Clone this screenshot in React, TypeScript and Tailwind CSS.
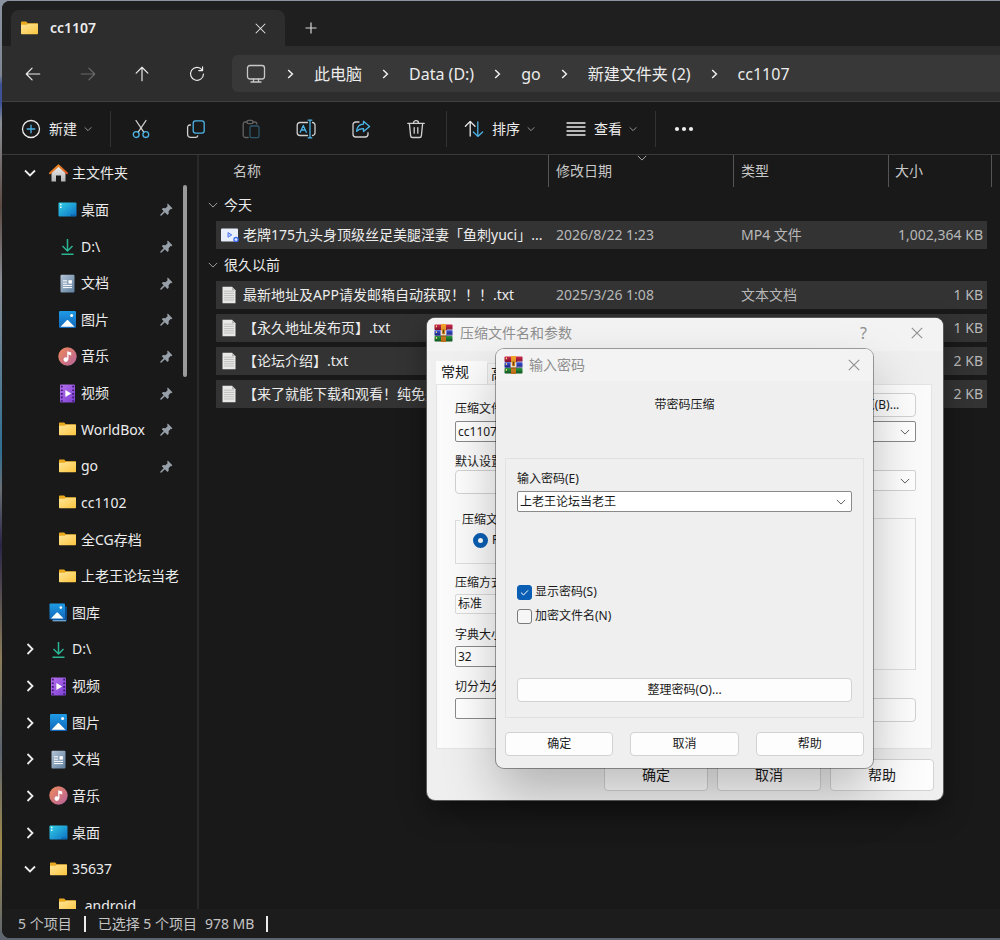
import type { ReactNode } from "react";
import clsx from "clsx";

type IconName = "home" | "desktop" | "download" | "doc" | "picture" | "music" | "video" | "folder" | "gallery";

type TreeItem = {
  label: string;
  icon: IconName;
  child?: boolean;
  pinned?: boolean;
  chevron?: "open" | "closed";
};

const tree: TreeItem[] = [
  { label: "主文件夹", icon: "home", chevron: "open" },
  { label: "桌面", icon: "desktop", child: true, pinned: true },
  { label: "D:\\", icon: "download", child: true, pinned: true },
  { label: "文档", icon: "doc", child: true, pinned: true },
  { label: "图片", icon: "picture", child: true, pinned: true },
  { label: "音乐", icon: "music", child: true, pinned: true },
  { label: "视频", icon: "video", child: true, pinned: true },
  { label: "WorldBox", icon: "folder", child: true, pinned: true },
  { label: "go", icon: "folder", child: true, pinned: true },
  { label: "cc1102", icon: "folder", child: true },
  { label: "全CG存档", icon: "folder", child: true },
  { label: "上老王论坛当老", icon: "folder", child: true },
  { label: "图库", icon: "gallery" },
  { label: "D:\\", icon: "download", chevron: "closed" },
  { label: "视频", icon: "video", chevron: "closed" },
  { label: "图片", icon: "picture", chevron: "closed" },
  { label: "文档", icon: "doc", chevron: "closed" },
  { label: "音乐", icon: "music", chevron: "closed" },
  { label: "桌面", icon: "desktop", chevron: "closed" },
  { label: "35637", icon: "folder", chevron: "open" },
  { label: ".android", icon: "folder", child: true },
];

const groups = [
  {
    title: "今天",
    files: [
      { name: "老牌175九头身顶级丝足美腿淫妻「鱼刺yuci」...", date: "2026/8/22 1:23", type: "MP4 文件", size: "1,002,364 KB", video: true },
    ],
  },
  {
    title: "很久以前",
    files: [
      { name: "最新地址及APP请发邮箱自动获取！！！.txt", date: "2025/3/26 1:08", type: "文本文档", size: "1 KB" },
      { name: "【永久地址发布页】.txt", date: "2025/3/26 1:08", type: "文本文档", size: "1 KB" },
      { name: "【论坛介绍】.txt", date: "2025/3/26 1:08", type: "文本文档", size: "2 KB" },
      { name: "【来了就能下载和观看！纯免费】.txt", date: "2025/3/26 1:08", type: "文本文档", size: "2 KB" },
    ],
  },
];

const crumbs = ["此电脑", "Data (D:)", "go", "新建文件夹 (2)", "cc1107"];

function Line({ size = 20, className, children }: { size?: number; className?: string; children: ReactNode }) {
  return (
    <svg
      width={size}
      height={size}
      viewBox="0 0 20 20"
      fill="none"
      stroke="currentColor"
      strokeWidth="1.3"
      strokeLinecap="round"
      strokeLinejoin="round"
      className={clsx("shrink-0", className)}
      aria-hidden="true"
    >
      {children}
    </svg>
  );
}

function Chevron({ dir, size = 12, width = 1.6, className }: { dir: "down" | "right"; size?: number; width?: number; className?: string }) {
  return (
    <svg width={size} height={size} viewBox="0 0 12 12" fill="none" stroke="currentColor" strokeWidth={width} className={clsx("shrink-0", className)} aria-hidden="true">
      <path d={dir === "down" ? "M1 3.5 6 8.5 11 3.5" : "M3.5 1 8.5 6 3.5 11"} />
    </svg>
  );
}

function Cross({ size = 12 }: { size?: number }) {
  return (
    <svg width={size} height={size} viewBox="0 0 12 12" fill="none" stroke="currentColor" strokeWidth="1.1" aria-hidden="true">
      <path d="M.8.8 11.2 11.2M11.2.8.8 11.2" />
    </svg>
  );
}

function Gradients() {
  return (
    <svg className="absolute size-0" aria-hidden="true">
      <defs>
        <linearGradient id="folder" x1="0" y1="0" x2="1" y2="1">
          <stop offset="0" stopColor="#ffe597" />
          <stop offset="1" stopColor="#fbc53f" />
        </linearGradient>
        <linearGradient id="desktop" x1="0" y1="0" x2="1" y2="1">
          <stop offset="0" stopColor="#33d0e6" />
          <stop offset="1" stopColor="#0c6fc4" />
        </linearGradient>
        <linearGradient id="doc" x1="0" y1="0" x2="1" y2="1">
          <stop offset="0" stopColor="#b4c4d6" />
          <stop offset="1" stopColor="#5f7f9f" />
        </linearGradient>
        <linearGradient id="picture" x1="0" y1="0" x2="0" y2="1">
          <stop offset="0" stopColor="#1f9be6" />
          <stop offset="1" stopColor="#1166b8" />
        </linearGradient>
        <linearGradient id="music" x1="0" y1="0" x2="1" y2="1">
          <stop offset="0" stopColor="#f08a5a" />
          <stop offset="1" stopColor="#b4629c" />
        </linearGradient>
        <linearGradient id="video" x1="0" y1="0" x2="1" y2="1">
          <stop offset="0" stopColor="#b870ee" />
          <stop offset="1" stopColor="#7a3fd0" />
        </linearGradient>
        <linearGradient id="house" x1="0" y1="0" x2="0" y2="1">
          <stop offset="0" stopColor="#f0f0f0" />
          <stop offset="1" stopColor="#b4b4b4" />
        </linearGradient>
        <linearGradient id="roof" x1="0" y1="0" x2="1" y2="1">
          <stop offset="0" stopColor="#f59b2c" />
          <stop offset="1" stopColor="#d9541e" />
        </linearGradient>
        <linearGradient id="belt" x1="0" y1="0" x2="0" y2="1">
          <stop offset="0" stopColor="#f2a52c" />
          <stop offset="1" stopColor="#b8691a" />
        </linearGradient>
        <linearGradient id="book-red" x1="0" y1="0" x2="0" y2="1">
          <stop offset="0" stopColor="#d02848" />
          <stop offset="1" stopColor="#7c1230" />
        </linearGradient>
        <linearGradient id="book-blue" x1="0" y1="0" x2="0" y2="1">
          <stop offset="0" stopColor="#3c50d8" />
          <stop offset="1" stopColor="#1a2378" />
        </linearGradient>
        <linearGradient id="book-green" x1="0" y1="0" x2="0" y2="1">
          <stop offset="0" stopColor="#2f9c44" />
          <stop offset="1" stopColor="#0f5220" />
        </linearGradient>
      </defs>
    </svg>
  );
}

function FolderIcon() {
  return (
    <svg width="19" height="19" viewBox="0 0 19 19" className="shrink-0" aria-hidden="true">
      <path d="M1 3.6c0-.6.4-1 1-1h4.2l1.6 1.6H17c.6 0 1 .4 1 1V8H1z" fill="#e9a91f" />
      <path d="M1 5.8h5.6l1.4-1H18v9.4c0 .6-.4 1-1 1H2c-.6 0-1-.4-1-1z" fill="url(#folder)" />
    </svg>
  );
}

function TreeIcon({ name }: { name: IconName }) {
  if (name === "folder") return <FolderIcon />;
  return (
    <svg width="19" height="19" viewBox="0 0 19 19" className="shrink-0" aria-hidden="true">
      {name === "home" && (
        <>
          <path d="M2.5 8.5 9.5 2l7 6.5v9H12v-6H7v6H2.5z" fill="url(#house)" />
          <path d="M1 9.3 9.5 1.4 18 9.3" fill="none" stroke="url(#roof)" strokeWidth="2" strokeLinejoin="round" strokeLinecap="round" />
        </>
      )}
      {name === "desktop" && (
        <>
          <rect x=".5" y="2.5" width="18" height="14" rx="1" fill="url(#desktop)" />
          <path d="M2 4.5h1.5M2 7.2h1.5" stroke="#e8fbff" strokeWidth="1.4" />
          <path d="M13 15.2h1.4M15.4 15.2h1.4" stroke="#0a4a86" strokeWidth="1" />
        </>
      )}
      {name === "download" && (
        <path d="M9.5 2v11.5M4.5 9l5 5 5-5M3.5 17.3h12" fill="none" stroke="#2bb594" strokeWidth="1.5" />
      )}
      {name === "doc" && (
        <>
          <rect x="2.5" y=".8" width="14" height="17.6" rx="1" fill="url(#doc)" />
          <path d="M5 6.8h4M5 9.2h4M5 11.4h9M5 13.6h9" stroke="#fff" strokeWidth="1" />
          <rect x="10.5" y="6.2" width="3.4" height="3.4" fill="#fff" />
        </>
      )}
      {name === "picture" && (
        <>
          <rect x="1" y="1" width="17" height="17" rx="1.2" fill="url(#picture)" />
          <path d="M2.5 16.8 8.6 10.4c.5-.5 1.2-.5 1.7 0l6.2 6.4z" fill="#fff" />
          <circle cx="13.6" cy="5.4" r="1.5" fill="#fff" />
        </>
      )}
      {name === "gallery" && (
        <>
          <path d="M4 3.5h14V17a1 1 0 0 1-1 1H4z" fill="#0d4c8c" />
          <path d="M3.5 17.8H17" stroke="#8fc7ee" strokeWidth="1" />
          <rect x=".5" y=".5" width="15.5" height="16" rx="1" fill="url(#picture)" />
          <path d="M2 15.4 7.4 9.8c.5-.5 1.1-.5 1.6 0l5.5 5.6z" fill="#fff" />
          <circle cx="11.8" cy="4.6" r="1.3" fill="#fff" />
        </>
      )}
      {name === "music" && (
        <>
          <circle cx="9.5" cy="9.5" r="9.2" fill="url(#music)" />
          <circle cx="7.8" cy="12.6" r="2.3" fill="#fff" />
          <path d="M9.2 12.6V4.2l4 1.4v2.8l-2.7-1v5.2" fill="#fff" />
        </>
      )}
      {name === "video" && (
        <>
          <rect x="2" y=".5" width="15" height="18" rx="1" fill="url(#video)" />
          <path d="M3.8 1.8v16M15.2 1.8v16" stroke="#3a1a70" strokeWidth="1.8" strokeDasharray="1.7 1.9" />
          <path d="M7.4 6v7l5.8-3.5z" fill="#fff" />
        </>
      )}
    </svg>
  );
}

function PinIcon() {
  return (
    <svg width="13" height="13" viewBox="0 0 13 13" className="shrink-0 text-[#97a0a8]" aria-hidden="true">
      <path d="M7.8.6 12.4 5.2l-1 1-.8-.2-2 2.3.1 2.4-1.2 1.2L1.8 6.2 3 5l2.4.2 2.2-2-.4-1.6z" fill="currentColor" />
      <path d="M4.6 8.4 1 12" stroke="currentColor" strokeWidth="1.5" strokeLinecap="round" />
    </svg>
  );
}

function WinrarIcon() {
  return (
    <svg width="19" height="18" viewBox="0 0 19 18" className="shrink-0" aria-hidden="true">
      <rect x=".5" y=".5" width="18" height="5.6" rx=".8" fill="url(#book-red)" />
      <rect x=".5" y="6.2" width="18" height="5.6" rx=".8" fill="url(#book-blue)" />
      <rect x=".5" y="11.9" width="18" height="5.6" rx=".8" fill="url(#book-green)" />
      <path d="M13 5.4h5.4M13 11.1h5.4" stroke="#b9b4c8" strokeWidth=".7" />
      <path d="M2.4 1.4v1.8M2.4 7.2V9M2.4 13v1.8" stroke="#f2d26a" strokeWidth="1.2" />
      <rect x="7" y="0" width="5" height="18" fill="url(#belt)" />
      <path d="M7.2 6.4v4.4h4.6V6.4" fill="none" stroke="#f1ece2" strokeWidth="1.3" />
      <path d="M9.5 5.6v3.8" stroke="#6a3f14" strokeWidth="1.3" />
      <path d="M6.6 12h5.8" stroke="#5a3c18" strokeWidth=".7" />
    </svg>
  );
}

function FileIcon({ video }: { video?: boolean }) {
  if (video) {
    return (
      <svg width="18" height="18" viewBox="0 0 18 18" className="shrink-0" aria-hidden="true">
        <rect x="0" y="2.5" width="17" height="13" rx="1" fill="#e9eefb" />
        <path d="M7 6.6v4.6l3.8-2.3z" fill="#b7caff" stroke="#4370f0" strokeWidth=".9" />
        <circle cx="15" cy="13.6" r="2.1" fill="#dbe5ff" stroke="#3d6cf0" strokeWidth="1.3" />
      </svg>
    );
  }
  return (
    <svg width="18" height="18" viewBox="0 0 18 18" className="shrink-0" aria-hidden="true">
      <path d="M1.5.8H11l3.5 3.4v13H1.5z" fill="#e8e8e6" />
      <path d="M11 .8v3.4h3.5z" fill="#b5b5b3" />
      <path d="M3 5.2h10M3 7.4h10M3 9.6h10M3 11.8h10M3 14h10" stroke="#b4b4b2" strokeWidth=".8" />
    </svg>
  );
}

function TabStrip() {
  return (
    <div className="flex h-[45px] items-end bg-[#1f1f1f] pl-[9px]">
      <div className="flex h-9 w-[274px] items-center rounded-t-lg bg-[#2d2d2d] pl-[9px] pr-[19px]">
        <FolderIcon />
        <span className="ml-[11px] flex-1 text-sm font-semibold">cc1107</span>
        <button type="button" aria-label="关闭标签页">
          <Cross size={11} />
        </button>
      </div>
      <button type="button" aria-label="新建标签页" className="flex h-9 w-[52px] items-center justify-center text-[#d8d8d8]">
        <svg width="12" height="12" viewBox="0 0 12 12" stroke="currentColor" strokeWidth="1.2" aria-hidden="true">
          <path d="M6 .5v11M.5 6h11" />
        </svg>
      </button>
    </div>
  );
}

function NavBar() {
  return (
    <nav className="flex h-[56px] items-center border-b border-[#3f3f3f] bg-[#2d2d2d] pl-[3px]">
      <button type="button" aria-label="后退" className="flex w-[55px] justify-center">
        <Line size={18}><path d="M17.5 10H2.5M9 3.5 2.5 10 9 16.5" /></Line>
      </button>
      <button type="button" aria-label="前进" className="flex w-[55px] justify-center text-[#6a6a6a]">
        <Line size={18}><path d="M2.5 10h15M11 3.5l6.5 6.5-6.5 6.5" /></Line>
      </button>
      <button type="button" aria-label="向上" className="flex w-[54px] justify-center">
        <Line size={18}><path d="M10 17.5v-15M3.5 9 10 2.5 16.5 9" /></Line>
      </button>
      <button type="button" aria-label="刷新" className="flex w-[55px] justify-center">
        <Line size={18}><path d="M15.5 5.2A7.2 7.2 0 1 0 17.2 10M16.2 2v4.2H12" /></Line>
      </button>
      <div className="ml-2 flex h-[37px] flex-1 items-center gap-5 rounded-l-md bg-[#383838] pl-3.5 text-base leading-6">
        <Line size={20} className="mr-px text-[#c8c8c8]">
          <rect x="1.5" y="1.5" width="17" height="13.5" rx="2.5" />
          <path d="M7.5 15v2.5M12.5 15v2.5M5 18h10" />
        </Line>
        {crumbs.map((crumb) => (
          <div key={crumb} className="flex items-center gap-5">
            <svg width="7" height="10" viewBox="0 0 7 10" fill="none" stroke="currentColor" strokeWidth="1.5" aria-hidden="true">
              <path d="M1.2 1 5.4 5 1.2 9" />
            </svg>
            <a href="#" className="whitespace-nowrap">{crumb}</a>
          </div>
        ))}
      </div>
    </nav>
  );
}

function MenuButton({ label, children, className }: { label: string; children: ReactNode; className?: string }) {
  return (
    <button type="button" className={clsx("flex items-center text-sm", className)}>
      {children}
      <span className="ml-2">{label}</span>
      <Chevron dir="down" size={8} width={1.3} className="ml-[7px] text-[#a8a8a8]" />
    </button>
  );
}

function ToolButton({ label, disabled, children }: { label: string; disabled?: boolean; children: ReactNode }) {
  return (
    <button type="button" aria-label={label} disabled={disabled} className="flex w-[55px] justify-center text-[#d0d0d0] disabled:opacity-40">
      <Line>{children}</Line>
    </button>
  );
}

function Toolbar() {
  return (
    <div className="flex h-[53px] items-center border-b border-[#3a3a3a] pt-0.5">
      <MenuButton label="新建" className="ml-[19px]">
        <Line>
          <circle cx="10" cy="10" r="8.5" />
          <path d="M10 6.2v7.6M6.2 10h7.6" stroke="#4cb4e7" />
        </Line>
      </MenuButton>
      <div className="ml-[18px] mr-0.5 h-9 w-px bg-[#333]" />
      <ToolButton label="剪切">
        <path d="M5 1.5 12.8 13.2M15 1.5 7.2 13.2" />
        <circle cx="5.2" cy="15.6" r="2.9" stroke="#4cb4e7" />
        <circle cx="14.8" cy="15.6" r="2.9" stroke="#4cb4e7" />
      </ToolButton>
      <ToolButton label="复制">
        <path d="M4.5 6H3.8A2.2 2.2 0 0 0 1.6 8.2v7.2a3 3 0 0 0 3 3h5.2a2 2 0 0 0 1.9-1.6" />
        <rect x="7.2" y="1.8" width="11" height="12.4" rx="2.4" stroke="#4cb4e7" />
      </ToolButton>
      <ToolButton label="粘贴" disabled>
        <path d="M6 3H4.2A2 2 0 0 0 2.2 5v11.5a2 2 0 0 0 2 2h3M12 3h1.8a2 2 0 0 1 2 2" />
        <rect x="6" y="1.4" width="6" height="3.2" rx="1.4" />
        <rect x="9" y="7" width="9" height="11.6" rx="1.6" stroke="#4cb4e7" />
      </ToolButton>
      <ToolButton label="重命名">
        <path d="M11.5 3.5H4a2.8 2.8 0 0 0-2.8 2.8v7.4A2.8 2.8 0 0 0 4 16.5h7.5M16.5 3.5A2.6 2.6 0 0 1 19 6.3v7.4a2.6 2.6 0 0 1-2.5 2.8" />
        <path d="M4.2 13.2 7.3 6.4l3 6.8M5.3 11h4M14 1.2v17.6M12.2 1.2h3.6M12.2 18.8h3.6" stroke="#4cb4e7" />
      </ToolButton>
      <ToolButton label="共享">
        <path d="M8 3H4.8A2.8 2.8 0 0 0 2 5.8v9.4A2.8 2.8 0 0 0 4.8 18h9.4a2.8 2.8 0 0 0 2.8-2.8v-1.5" />
        <path d="M12.5 2.2 18.6 7.4l-6.1 5.2V9.6c-3.3-.1-5.2.7-6.9 2.8.4-4 2.6-7 6.9-7.2z" stroke="#4cb4e7" />
      </ToolButton>
      <ToolButton label="删除">
        <path d="M1.8 4.4h16.4M7.4 4.2a2.6 2.6 0 0 1 5.2 0M3.4 4.6l1.2 12a2 2 0 0 0 2 1.9h6.8a2 2 0 0 0 2-1.9l1.2-12M8.2 8.6v5.6M11.8 8.6v5.6" />
      </ToolButton>
      <div className="ml-[3px] h-9 w-px bg-[#333]" />
      <MenuButton label="排序" className="ml-[17px]">
        <Line>
          <path d="M6.2 17V2.6M1.4 7.2 6.2 2.4 11 7.2" />
          <path d="M13.8 3v14.4M9.4 13l4.4 4.4 4.8-4.4" stroke="#4cb4e7" />
        </Line>
      </MenuButton>
      <MenuButton label="查看" className="ml-[31px]">
        <Line><path d="M1 4h18M1 8h18M1 12h18M1 16h18" /></Line>
      </MenuButton>
      <div className="ml-[18px] h-9 w-px bg-[#333]" />
      <button type="button" aria-label="更多" className="ml-[18px]">
        <svg width="20" height="6" viewBox="0 0 20 6" fill="currentColor" aria-hidden="true">
          <circle cx="3" cy="3" r="2.1" />
          <circle cx="10" cy="3" r="2.1" />
          <circle cx="17" cy="3" r="2.1" />
        </svg>
      </button>
    </div>
  );
}

function Sidebar() {
  return (
    <aside className="relative w-[197px] shrink-0 overflow-hidden border-r-2 border-[#292929]">
      <ul className="flex h-[calc(100%+15px)] flex-col">
        {tree.map((item, i) => (
          <li key={i} className="flex min-h-0 flex-1 items-center pr-5">
            <span className={clsx("flex shrink-0 items-center pl-[22px]", item.child ? "w-14" : "w-[47px]")}>
              {item.chevron && <Chevron dir={item.chevron === "open" ? "down" : "right"} width={1.8} />}
            </span>
            <TreeIcon name={item.icon} />
            <span className="ml-1 min-w-0 flex-1 whitespace-nowrap">{item.label}</span>
            {item.pinned && <span className="pr-1"><PinIcon /></span>}
          </li>
        ))}
      </ul>
      <div className="absolute right-2.5 top-[30px] h-48 w-1 rounded-full bg-[#9a9a9a]" />
    </aside>
  );
}

function FileList() {
  return (
    <main className="min-w-0 flex-1 overflow-hidden pr-2">
      <table className="w-full table-fixed border-collapse text-left">
        <colgroup>
          <col className="w-[17px]" />
          <col />
          <col className="w-[185px]" />
          <col className="w-[155px]" />
          <col className="w-[103px]" />
        </colgroup>
        <thead className="text-[#c8c8c8]">
          <tr className="h-[39px] align-top">
            <th />
            <th className="p-0 font-normal">
              <div className="flex h-8 items-center border-r border-[#555] pl-[17px]">名称</div>
            </th>
            <th className="relative p-0 font-normal">
              <div className="flex h-8 items-center border-r border-[#555] pl-[7px]">修改日期</div>
              <Chevron dir="down" size={10} width={1} className="absolute left-[88px] -top-[2px]" />
            </th>
            <th className="p-0 font-normal">
              <div className="flex h-8 items-center border-r border-[#555] pl-[7px]">类型</div>
            </th>
            <th className="p-0 font-normal">
              <div className="flex h-8 items-center border-r border-[#555] pl-[6px]">大小</div>
            </th>
          </tr>
        </thead>
        {groups.map((group) => (
          <tbody key={group.title}>
            <tr className="h-[27px] align-top">
              <th colSpan={5} className="p-0 font-normal">
                <div className="flex h-[22px] items-center gap-1.5 pl-[9px]">
                  <Chevron dir="down" size={10} width={1.1} className="text-[#a8a8a8]" />
                  {group.title}
                </div>
              </th>
            </tr>
            {group.files.map((file) => (
              <tr key={file.name} className="h-[33px] align-top">
                <td />
                <td className="p-0">
                  <div className="flex h-7 items-center bg-[#333] pl-[5px]">
                    <FileIcon video={"video" in file} />
                    <span className="ml-1 whitespace-nowrap">{file.name}</span>
                  </div>
                </td>
                <td className="p-0"><div className="flex h-7 items-center bg-[#333] pl-[7px] text-[#b8b8b8]">{file.date}</div></td>
                <td className="p-0"><div className="flex h-7 items-center bg-[#333] pl-[7px] text-[#b8b8b8]">{file.type}</div></td>
                <td className="p-0">
                  <div className="mr-[5px] flex h-7 items-center justify-end whitespace-nowrap bg-[#333] pr-1 text-[#b8b8b8]">{file.size}</div>
                </td>
              </tr>
            ))}
          </tbody>
        ))}
      </table>
    </main>
  );
}

function StatusBar() {
  return (
    <footer className="relative flex h-[29px] shrink-0 items-center bg-[#1c1c1c] pl-4 text-[#c4c4c4]">
      <span>5 个项目</span>
      <span className="mx-3 h-4 w-0.5 bg-[#ececec]" />
      <span>已选择 5 个项目</span>
      <span className="ml-2">978 MB</span>
      <span className="ml-3 h-4 w-0.5 bg-[#ececec]" />
    </footer>
  );
}

function DialogButton({ children, className }: { children?: ReactNode; className?: string }) {
  return (
    <button type="button" className={clsx("rounded border border-[#d2d2d2] bg-[#fdfdfd]", className)}>
      {children}
    </button>
  );
}

function Combo({ id, value, label, light }: { id: string; value: string; label?: string; light?: boolean }) {
  return (
    <div className={clsx("flex h-[21px] items-center rounded-[2px] border bg-white", light ? "border-[#d2d2d2]" : "border-[#8a8a8a]")}>
      <input id={id} aria-label={label} defaultValue={value} className="min-w-0 flex-1 bg-transparent px-0.5 leading-4 outline-none" />
      <button type="button" aria-label="展开" className="flex w-5 justify-center text-[#606060]">
        <Chevron dir="down" size={10} width={1.2} />
      </button>
    </div>
  );
}

function ArchiveDialog() {
  return (
    <section
      role="dialog"
      aria-labelledby="archive-title"
      className="absolute left-[427px] top-[318px] flex h-[482px] w-[516px] flex-col overflow-hidden rounded-lg bg-[#efefef] text-xs leading-4 text-[#1a1a1a] shadow-[0_0_0_1px_#5a5a5a,0_12px_28px_rgba(0,0,0,0.4)]"
    >
      <header className="flex h-[33px] shrink-0 items-center bg-[#f3f3f3] pb-1 pl-[7px] pr-5 text-[#8f8f8f]">
        <WinrarIcon />
        <h2 id="archive-title" className="ml-[7px] flex-1 text-sm">压缩文件名和参数</h2>
        <button type="button" aria-label="帮助" className="mr-11 text-base">?</button>
        <button type="button" aria-label="关闭"><Cross /></button>
      </header>

      <div role="tablist" className="mt-[10px] flex h-[23px] items-end pl-[9px] text-sm">
        <button type="button" role="tab" aria-selected="true" className="h-[23px] w-[51px] bg-[#fbfbfb] pb-0.5 pl-[5px] text-left">常规</button>
        <button type="button" role="tab" aria-selected="false" className="h-[21px] border border-b-0 border-[#e0e0e0] bg-[#f2f2f2] px-[3px]">高级</button>
      </div>

      <div className="mr-[11px] ml-[9px] flex h-[365px] shrink-0 flex-col border border-[#e3e3e3] bg-[#fbfbfb] pl-[18px] pr-[15px] pt-2">
        <div className="flex items-end justify-between">
          <label htmlFor="archive-name">压缩文件名(A)</label>
          <DialogButton className="h-6 w-[92px] pl-2.5">浏览(B)...</DialogButton>
        </div>
        <div className="mt-1">
          <Combo id="archive-name" value="cc1107.rar" />
        </div>
        <div className="mt-3">默认设置</div>
        <div className="flex h-6 justify-between">
          <DialogButton className="h-6 w-[158px]">配置(F)...</DialogButton>
          <div className="w-[186px]">
            <Combo id="update-mode" label="更新方式" value="添加并替换文件" light />
          </div>
        </div>

        <div className="mt-[18px] flex flex-1 gap-4">
          <div className="w-[200px]">
            <fieldset className="h-[52px] border border-[#dedede] pl-[17px]">
              <legend className="-ml-[13px] h-4 px-0.5">压缩文件格式</legend>
              <label className="mt-1 flex items-center gap-1">
                <input type="radio" name="format" defaultChecked className="size-[15px] appearance-none rounded-full border-[5px] border-[#0a5fb4] bg-white" />
                RAR
              </label>
            </fieldset>
            <label htmlFor="method" className="mt-[11px] block h-4">压缩方式(C)</label>
            <select id="method" className="mt-[3px] block h-5 w-full appearance-none rounded-[2px] border border-[#dadada] bg-[#fdfdfd] px-0.5 leading-4">
              <option>标准</option>
            </select>
            <label htmlFor="dictionary" className="mt-[13px] block h-4">字典大小(I)</label>
            <select id="dictionary" className="mt-[3px] block h-[21px] w-full appearance-none rounded-[2px] border border-[#8a8a8a] bg-white px-0.5 leading-4">
              <option>32</option>
            </select>
            <label htmlFor="volume" className="mt-[12px] block h-4">切分为分卷(V)</label>
            <input id="volume" className="mt-[3px] block h-[21px] w-full rounded-[2px] border border-[#8a8a8a] bg-white" />
          </div>
          <div className="flex flex-1 flex-col pt-1.5">
            <div className="h-[152px] border border-[#dedede]" />
            <DialogButton className="mt-7 h-6" />
          </div>
        </div>
      </div>

      <footer className="mt-[10px] flex justify-end gap-[9px] pr-[9px] text-sm">
        <DialogButton className="h-8 w-[104px]">确定</DialogButton>
        <DialogButton className="h-8 w-[104px]">取消</DialogButton>
        <DialogButton className="h-8 w-[104px]">帮助</DialogButton>
      </footer>
    </section>
  );
}

function PasswordDialog() {
  return (
    <section
      role="dialog"
      aria-labelledby="password-title"
      className="absolute left-[496px] top-[349px] w-[377px] rounded-lg bg-[#efefef] pb-3 text-xs leading-4 text-[#1a1a1a] shadow-[0_0_0_1px_rgba(0,0,0,0.35),0_26px_52px_rgba(0,0,0,0.25)]"
    >
      <header className="flex h-8 items-center rounded-t-lg bg-[#f3f3f3] pl-2 pr-[13px] text-[#8f8f8f]">
        <WinrarIcon />
        <h2 id="password-title" className="ml-1.5 flex-1 text-sm">输入密码</h2>
        <button type="button" aria-label="关闭"><Cross /></button>
      </header>

      <p className="mt-4 text-center">带密码压缩</p>

      <div className="mx-[9px] mt-[45px] border border-[#e2e2e2] px-[11px] pb-[15px] pt-3">
        <label htmlFor="password" className="block h-4">输入密码(E)</label>
        <div className="mt-1">
          <Combo id="password" value="上老王论坛当老王" />
        </div>
        <div className="mt-[72px] flex flex-col gap-2">
          <label className="flex items-center gap-[3px]">
            <span className="relative flex size-[15px]">
              <input type="checkbox" defaultChecked className="size-[15px] appearance-none rounded-[3px] border border-[#7a7a7a] bg-white checked:border-[#0a5fb4] checked:bg-[#0a5fb4]" />
              <svg width="15" height="15" viewBox="0 0 15 15" fill="none" stroke="#fff" className="pointer-events-none absolute inset-0" aria-hidden="true">
                <path d="M4 7.6 6.5 10 11 5.4" />
              </svg>
            </span>
            显示密码(S)
          </label>
          <label className="flex items-center gap-[3px]">
            <input type="checkbox" className="size-[15px] appearance-none rounded-[3px] border border-[#7a7a7a] bg-[#f6f6f6]" />
            加密文件名(N)
          </label>
        </div>
        <DialogButton className="mt-[54px] h-6 w-full">整理密码(O)...</DialogButton>
      </div>

      <footer className="mx-[9px] mt-3.5 flex gap-[17px]">
        <DialogButton className="h-6 flex-1">确定</DialogButton>
        <DialogButton className="h-6 flex-1">取消</DialogButton>
        <DialogButton className="h-6 flex-1">帮助</DialogButton>
      </footer>
    </section>
  );
}

export default function App() {
  return (
    <div className="relative flex h-screen flex-col overflow-hidden bg-[linear-gradient(180deg,#8b93a0_0%,#7f8794_8%,#3d5296_9%,#3d5296_11%,#8b8f96_13%,#5b4a42_22%,#8b8f96_30%,#2f6f94_48%,#6a6f75_52%,#2a2548_58%,#8a7d5a_70%,#5c6470_80%,#a08a4a_90%,#5c6470_100%)] pb-0.5 pl-0.5 pt-px font-['Noto_Sans','Noto_Sans_CJK_SC',sans-serif] text-sm leading-5 text-[#ececec]">
      <Gradients />
      <div className="flex min-h-0 flex-1 flex-col overflow-hidden rounded-l-lg bg-[#191919]">
        <TabStrip />
        <NavBar />
        <Toolbar />
        <div className="flex min-h-0 flex-1">
          <Sidebar />
          <FileList />
        </div>
        <StatusBar />
      </div>
      <ArchiveDialog />
      <PasswordDialog />
    </div>
  );
}
